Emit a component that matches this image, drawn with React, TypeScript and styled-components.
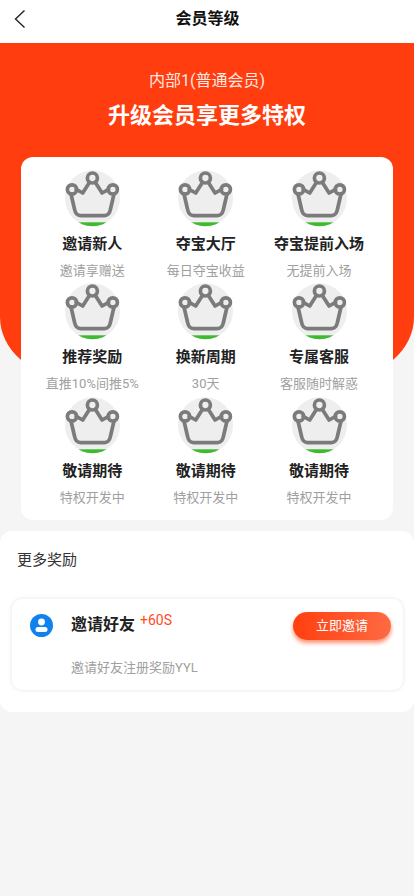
import React from "react";
import styled, { createGlobalStyle } from "styled-components";

const Global = createGlobalStyle`
  html, body { margin: 0; padding: 0; background: #f5f5f5; }
  body { font-family: Roboto, "Noto Sans CJK SC", sans-serif; }
  * { box-sizing: border-box; }
`;

const Page = styled.div`
  width: 414px;
  height: 896px;
  overflow: hidden;
  background: #f5f5f5;
`;

const Header = styled.header`
  height: 43px;
  background: #fff;
  display: flex;
  align-items: center;
  justify-content: center;
  position: relative;
`;

const Back = styled.svg`
  position: absolute;
  left: 13px;
  top: 9px;
  width: 13px;
  height: 20px;
`;

const PageTitle = styled.h1`
  margin: 0 0 5px 1px;
  font-size: 16px;
  line-height: 22px;
  font-weight: 700;
  color: #111;
`;

const Hero = styled.section`
  height: 334px;
  background: #ff3d0f;
  border-radius: 0 0 70px 70px / 0 0 60px 60px;
  display: flex;
  flex-direction: column;
  align-items: center;
  padding-top: 27px;
  margin-bottom: -220px;
`;

const Level = styled.div`
  font-size: 16px;
  line-height: 22px;
  color: #ffe9e2;
`;

const Headline = styled.h2`
  margin: 8px 0 0;
  font-size: 22px;
  line-height: 32px;
  font-weight: 700;
  color: #fff;
`;

const PerkCard = styled.div`
  position: relative;
  margin: 0 21px;
  width: 372px;
  height: 363px;
  border-radius: 12px;
  background: #fff;
  padding: 13px 16px 0 14.6px;
  display: grid;
  grid-template-columns: repeat(3, 113.4px);
  grid-auto-rows: 113.4px;
`;

const Perk = styled.div`
  display: flex;
  flex-direction: column;
  align-items: center;
`;

const CrownSvg = styled.svg`
  width: 55px;
  height: 57px;
  display: block;
  flex: none;
`;

const PerkTitle = styled.div`
  margin-top: 6px;
  font-size: 15px;
  line-height: 22px;
  font-weight: 700;
  color: #222;
  white-space: nowrap;
`;

const PerkDesc = styled.div`
  margin-top: 7px;
  font-size: 13px;
  line-height: 18px;
  color: #a0a0a0;
  white-space: nowrap;
`;

const More = styled.section`
  margin-top: 11px;
  height: 181px;
  background: #fff;
  border-radius: 12px;
  padding: 18px 11px 0 12px;
`;

const MoreTitle = styled.h3`
  margin: 0 0 0 5px;
  font-size: 15px;
  line-height: 22px;
  font-weight: 400;
  color: #333;
`;

const Task = styled.div`
  margin-top: 28px;
  height: 91px;
  border-radius: 10px;
  background: #fff;
  box-shadow: 0 0 4px rgba(0, 0, 0, 0.11);
  padding: 13px 12px 0 18px;
  display: grid;
  grid-template-columns: 41px 1fr auto;
  grid-template-rows: 28px auto;
`;

const Avatar = styled.svg`
  width: 23px;
  height: 23px;
  margin-top: 2px;
  display: block;
`;

const TaskHead = styled.div`
  display: flex;
  align-items: flex-start;
`;

const TaskName = styled.div`
  margin-top: 1px;
  font-size: 16px;
  line-height: 24px;
  font-weight: 700;
  color: #222;
`;

const Bonus = styled.span`
  margin: -2px 0 0 5px;
  font-size: 14px;
  line-height: 20px;
  color: #ff4a1c;
`;

const Invite = styled.button`
  width: 98px;
  height: 28px;
  border: 0;
  padding: 0;
  border-radius: 14px;
  background: linear-gradient(90deg, #ff3f0f, #ff6a42);
  box-shadow: 0 3px 4px rgba(255, 70, 20, 0.6);
  color: #fff;
  font: 400 13px/28px Roboto, "Noto Sans CJK SC", sans-serif;
`;

const TaskDesc = styled.div`
  grid-column: 2 / 4;
  margin-top: 19px;
  font-size: 13px;
  line-height: 18px;
  color: #a0a0a0;
`;

const Crown = () => (
  <CrownSvg viewBox="0 0 55 57">
    <defs>
      <clipPath id="crown-disc">
        <ellipse cx="27.5" cy="28.3" rx="27.5" ry="28" />
      </clipPath>
    </defs>
    <ellipse cx="27.5" cy="28.3" rx="27.5" ry="28" fill="#eeeeee" />
    <rect x="0" y="52.3" width="55" height="5" fill="#3fb92f" clipPath="url(#crown-disc)" />
    <g fill="none" stroke="#7b7b7b" strokeWidth="3.7" strokeLinejoin="round" strokeLinecap="round">
      <circle cx="27.4" cy="8" r="5" />
      <circle cx="7" cy="19.4" r="4.6" />
      <circle cx="47.8" cy="19.4" r="4.6" />
      <path d="M24.4 12.4 L17.7 23 L11.2 19.4 M30.4 12.4 L37.1 23 L43.6 19.4" />
      <path d="M6 24 L9.6 39.5 Q10.8 45.6 15.5 45.6 H39.5 Q44.2 45.6 45.4 39.5 L49 24" />
    </g>
  </CrownSvg>
);

const perks = [
  ["邀请新人", "邀请享赠送"],
  ["夺宝大厅", "每日夺宝收益"],
  ["夺宝提前入场", "无提前入场"],
  ["推荐奖励", "直推10%间推5%"],
  ["换新周期", "30天"],
  ["专属客服", "客服随时解惑"],
  ["敬请期待", "特权开发中"],
  ["敬请期待", "特权开发中"],
  ["敬请期待", "特权开发中"],
];

export default function App() {
  return (
    <Page>
      <Global />
      <Header>
        <Back viewBox="0 0 13 20">
          <path d="M11.5 1.5 L2.5 10 L11.5 18.5" fill="none" stroke="#222" strokeWidth="1.4" />
        </Back>
        <PageTitle>会员等级</PageTitle>
      </Header>
      <Hero>
        <Level>内部1(普通会员)</Level>
        <Headline>升级会员享更多特权</Headline>
      </Hero>
      <PerkCard>
        {perks.map(([title, desc], i) => (
          <Perk key={i}>
            <Crown />
            <PerkTitle>{title}</PerkTitle>
            <PerkDesc>{desc}</PerkDesc>
          </Perk>
        ))}
      </PerkCard>
      <More>
        <MoreTitle>更多奖励</MoreTitle>
        <Task>
          <Avatar viewBox="0 0 23 23">
            <circle cx="11.5" cy="11.5" r="11.5" fill="#0f82ee" />
            <circle cx="11.5" cy="8" r="3.4" fill="#fff" />
            <rect x="5.5" y="13" width="12" height="5" rx="2.5" fill="#fff" />
          </Avatar>
          <TaskHead>
            <TaskName>邀请好友</TaskName>
            <Bonus>+60S</Bonus>
          </TaskHead>
          <Invite>立即邀请</Invite>
          <TaskDesc>邀请好友注册奖励YYL</TaskDesc>
        </Task>
      </More>
    </Page>
  );
}
